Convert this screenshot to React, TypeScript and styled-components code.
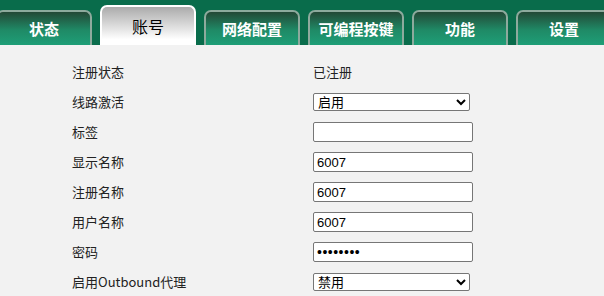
import React from "react";
import styled, { createGlobalStyle, css } from "styled-components";

const GlobalStyle = createGlobalStyle`
  html, body {
    margin: 0;
    padding: 0;
    background: #f2f2f2;
    font-family: "Noto Sans CJK SC", "Noto Sans", sans-serif;
  }
`;

const tabs = ["状态", "账号", "网络配置", "可编程按键", "功能", "设置"];

interface IRow {
  label: string;
  kind: "text" | "select" | "input" | "password";
  value: string;
  options?: string[];
}

const rows: IRow[] = [
  { label: "注册状态", kind: "text", value: "已注册" },
  { label: "线路激活", kind: "select", value: "启用", options: ["启用", "禁用"] },
  { label: "标签", kind: "input", value: "" },
  { label: "显示名称", kind: "input", value: "6007" },
  { label: "注册名称", kind: "input", value: "6007" },
  { label: "用户名称", kind: "input", value: "6007" },
  { label: "密码", kind: "password", value: "12345678" },
  { label: "启用Outbound代理", kind: "select", value: "禁用", options: ["启用", "禁用"] }
];

const App: React.FC = () => {
  return (
    <>
      <GlobalStyle />
      <Page>
        <TabBar>
          {tabs.map(t => (
            <Tab key={t} active={t === "账号"}>
              {t}
            </Tab>
          ))}
        </TabBar>
        <Form>
          {rows.map(r => (
            <Row key={r.label}>
              <Label>{r.label}</Label>
              {r.kind === "text" && <Label>{r.value}</Label>}
              {r.kind === "select" && (
                <Select defaultValue={r.value}>
                  {r.options!.map(o => (
                    <option key={o}>{o}</option>
                  ))}
                </Select>
              )}
              {r.kind === "input" && <Input type="text" defaultValue={r.value} />}
              {r.kind === "password" && (
                <Input type="password" defaultValue={r.value} password />
              )}
            </Row>
          ))}
        </Form>
      </Page>
    </>
  );
};

export default App;

const Page = styled.div`
  width: 604px;
  height: 296px;
  overflow: hidden;
  background: #f2f2f2;
`;

const TabBar = styled.div`
  height: 45px;
  background: #096c4b;
  display: flex;
  align-items: flex-end;
  gap: 8px;
  margin-left: -4px;
  overflow: hidden;
`;

const Tab = styled.div<{ active?: boolean }>`
  flex: none;
  box-sizing: border-box;
  width: 96px;
  height: 35px;
  border: 2px solid #8daa9d;
  border-bottom: none;
  border-radius: 7px 7px 0 0;
  background: linear-gradient(to bottom, #234836 0%, #1f8a66 55%, #1e9e77 100%);
  color: #ffffff;
  font-size: 15px;
  font-weight: bold;
  line-height: 1;
  display: flex;
  align-items: center;
  justify-content: center;
  ${({ active }) =>
    active &&
    css`
      height: 40px;
      border-color: #ffffff;
      background: linear-gradient(to bottom, #ababab 0%, #dcdcdc 50%, #ffffff 85%, #ffffff 100%);
      color: #000000;
      font-size: 16px;
      font-weight: normal;
    `}
`;

const Form = styled.div`
  padding: 12px 0 0 72px;
  display: flex;
  flex-direction: column;
`;

const Row = styled.div`
  height: 30px;
  display: grid;
  grid-template-columns: 241px 1fr;
  align-items: center;
`;

const Label = styled.div`
  font-size: 13px;
  line-height: 16px;
  color: #222;
`;

const fieldFont = css`
  font-family: "Liberation Sans", "Noto Sans CJK SC", sans-serif;
  font-size: 13px;
  color: #000;
`;

const Input = styled.input<{ password?: boolean }>`
  ${fieldFont}
  box-sizing: border-box;
  width: 160px;
  height: 20px;
  margin: 0;
  padding: 0 3px;
  border: 1px solid #767676;
  border-radius: 2px;
  background: #fff;
  outline: none;
  ${({ password }) =>
    password &&
    css`
      font-size: 14px;
      letter-spacing: 0.5px;
    `}
`;

const Select = styled.select`
  ${fieldFont}
  box-sizing: border-box;
  width: 157px;
  height: 18px;
  line-height: 16px;
  margin: 0;
  padding: 0;
  border: 1px solid #767676;
  border-radius: 2px;
  background: #fff;
`;
